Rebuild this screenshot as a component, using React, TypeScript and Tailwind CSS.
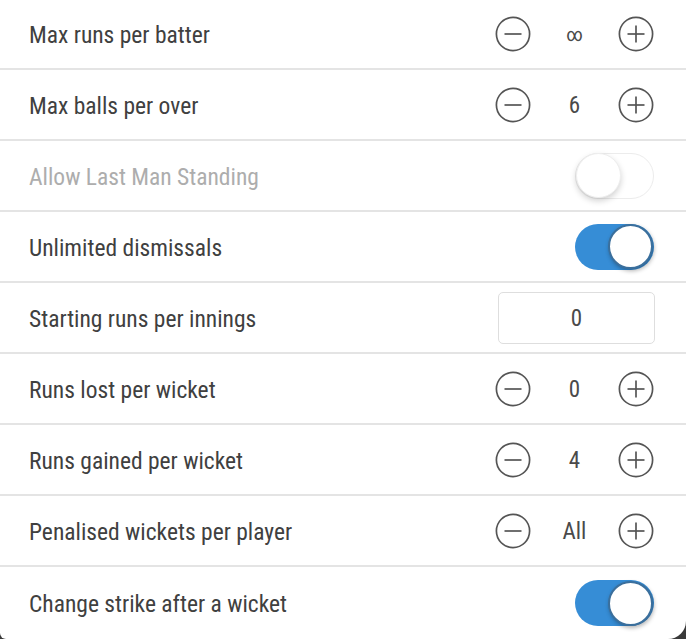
import React from "react";

type Row =
  | { label: string; kind: "stepper"; value: string }
  | { label: string; kind: "toggle"; on: boolean; disabled?: boolean }
  | { label: string; kind: "input"; value: string };

const rows: Row[] = [
  { label: "Max runs per batter", kind: "stepper", value: "∞" },
  { label: "Max balls per over", kind: "stepper", value: "6" },
  { label: "Allow Last Man Standing", kind: "toggle", on: false, disabled: true },
  { label: "Unlimited dismissals", kind: "toggle", on: true },
  { label: "Starting runs per innings", kind: "input", value: "0" },
  { label: "Runs lost per wicket", kind: "stepper", value: "0" },
  { label: "Runs gained per wicket", kind: "stepper", value: "4" },
  { label: "Penalised wickets per player", kind: "stepper", value: "All" },
  { label: "Change strike after a wicket", kind: "toggle", on: true },
];

function CircleIcon({ plus }: { plus?: boolean }) {
  return (
    <svg width="36" height="36" viewBox="0 0 36 36" fill="none" stroke="#555" strokeWidth="1.7">
      <circle cx="18" cy="18" r="16.6" />
      <line x1="9.5" y1="18" x2="26.5" y2="18" />
      {plus && <line x1="18" y1="9.5" x2="18" y2="26.5" />}
    </svg>
  );
}

function Stepper({ value }: { value: string }) {
  const inf = value === "∞";
  return (
    <div className="flex items-center">
      <CircleIcon />
      <span
        className={
          "w-[87px] text-center text-[#4a4a4a] [font-weight:380] " +
          (inf ? "text-[19px] mt-[3px]" : "text-[23px] mt-[4px]")
        }
      >
        {value}
      </span>
      <CircleIcon plus />
    </div>
  );
}

function Toggle({ on }: { on: boolean }) {
  return on ? (
    <div className="w-[79px] h-[46px] rounded-full bg-[#368dd6] flex items-center justify-end p-[1px]">
      <div className="w-[45px] h-[45px] rounded-full bg-white border-2 border-[#3b6f9c] shadow-[1px_2px_4px_rgba(0,0,0,0.3)]" />
    </div>
  ) : (
    <div className="w-[79px] h-[46px] rounded-full bg-white border border-[#ececec] flex items-center justify-start">
      <div className="w-[45px] h-[45px] rounded-full bg-white shadow-[0_3px_6px_rgba(0,0,0,0.18)] border border-[#eee]" />
    </div>
  );
}

export default function App() {
  return (
    <div
      className="w-[686px] h-[639px] bg-[#3a3a3a] overflow-hidden"
      style={{ fontFamily: 'Roboto, "DejaVu Sans Condensed", sans-serif', fontStretch: "75%" }}
    >
      <div className="h-full bg-white rounded-br-[18px] rounded-bl-[6px] flex flex-col">
        {rows.map((r, i) => (
          <div
            key={r.label}
            className={
              "flex items-center justify-between pl-[29px] pr-[32px] " +
              (i === 0 ? "h-[70px] " : "h-[71px] ") +
              (i < rows.length - 1 ? "border-b-2 border-[#e4e4e4]" : "flex-1")
            }
          >
            <span
              className={
                "text-[23.5px] [font-weight:380] mt-[4px] " +
                (r.kind === "toggle" && r.disabled ? "text-[#adadad]" : "text-[#404040]")
              }
            >
              {r.label}
            </span>
            {r.kind === "stepper" && <Stepper value={r.value} />}
            {r.kind === "toggle" && <Toggle on={r.on} />}
            {r.kind === "input" && (
              <div className="w-[157px] h-[52px] rounded-[5px] border border-[#dedede] flex items-center justify-center text-[23px] [font-weight:380] text-[#4a4a4a] mr-[-1px] pt-[3px]">
                {r.value}
              </div>
            )}
          </div>
        ))}
      </div>
    </div>
  );
}
